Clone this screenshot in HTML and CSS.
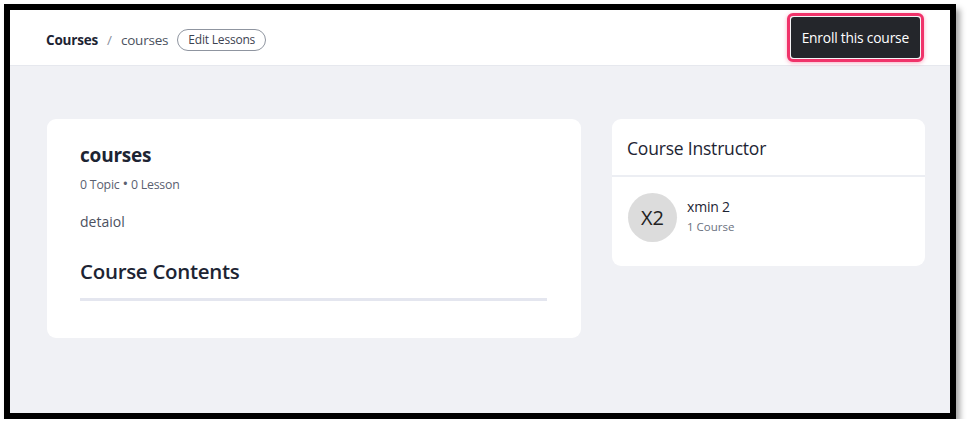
FILE: index.html
```html
<!DOCTYPE html>
<html>
<head>
<meta charset="utf-8">
<link rel="stylesheet" href="styles.css">
</head>
<body>
<div class="frame">
  <header class="topbar">
    <nav class="crumbs">
      <span class="crumb-root">Courses</span>
      <span class="crumb-sep">/</span>
      <span class="crumb-cur">courses</span>
      <button class="pill">Edit Lessons</button>
    </nav>
    <div class="enroll-wrap">
      <button class="enroll">Enroll this course</button>
    </div>
  </header>
  <main class="content">
    <section class="card course">
      <h1 class="course-title">courses</h1>
      <div class="meta">0 Topic <span class="dot">&bull;</span> 0 Lesson</div>
      <p class="desc">detaiol</p>
      <h2 class="contents-title">Course Contents</h2>
      <div class="rule"></div>
    </section>
    <aside class="card instructor">
      <div class="inst-head">Course Instructor</div>
      <div class="inst-body">
        <div class="avatar">X2</div>
        <div class="inst-info">
          <div class="inst-name">xmin 2</div>
          <div class="inst-count">1 Course</div>
        </div>
      </div>
    </aside>
  </main>
</div>
</body>
</html>
```

FILE: styles.css
```css
* { box-sizing: border-box; }
html, body { margin: 0; padding: 0; background: #fff; }
body { font-family: "Open Sans", "Noto Sans", sans-serif; color: #1d2433; }

.frame {
  margin: 4px 0 0 4px;
  width: 952px;
  height: 415px;
  border: 6px solid #000;
  background: #f0f1f5;
  box-shadow: 4px 5px 6px rgba(0,0,0,0.35);
  display: flex;
  flex-direction: column;
}

.topbar {
  height: 56px;
  flex: none;
  background: #fff;
  border-bottom: 1px solid #e6e8ee;
  display: flex;
  align-items: center;
  justify-content: space-between;
  padding: 4px 26px 0 36px;
}

.crumbs { display: flex; align-items: center; font-size: 13.5px; }
.crumb-root { font-weight: 700; color: #1d2433; letter-spacing: -0.2px; }
.crumb-sep { color: #8a909c; margin: 0 9px; }
.crumb-cur { color: #4b5160; margin-right: 9px; letter-spacing: -0.2px; }
.pill {
  font-family: inherit;
  font-size: 12px;
  color: #3c4250;
  background: #fff;
  border: 1px solid #8f95a0;
  border-radius: 12px;
  height: 22px;
  padding: 0 10px;
  letter-spacing: -0.2px;
}

.enroll-wrap {
  border: 3px solid #f0336a;
  border-radius: 6px;
  padding: 1px;
  box-shadow: 0 1px 4px rgba(240,51,106,0.4);
  background: #f4f4f6;
  margin-top: -5px;
}
.enroll {
  font-family: inherit;
  display: block;
  background: #24262b;
  color: #fff;
  border: 0;
  border-radius: 3px;
  height: 41px;
  padding: 0 11px;
  font-size: 13.8px;
  letter-spacing: -0.2px;
}

.content {
  flex: 1;
  display: grid;
  grid-template-columns: 534px 313px;
  column-gap: 31px;
  align-items: start;
  padding: 53px 0 0 37px;
}

.card { background: #fff; border-radius: 9px; }

.course { padding: 22px 34px 37px 33px; }
.course-title { margin: 0; font-size: 19px; font-weight: 700; line-height: 28px; letter-spacing: -0.2px; }
.meta { margin-top: 7px; font-size: 12.3px; color: #5a6070; letter-spacing: -0.2px; }
.dot { font-size: 15px; line-height: 1; }
.desc { margin: 19px 0 0; font-size: 14px; color: #4b5160; }
.contents-title { margin: 26px 0 0; font-size: 20.5px; font-weight: 600; line-height: 28px; letter-spacing: -0.3px; }
.rule { margin-top: 13px; height: 3px; background: #e4e6ef; }

.inst-head {
  height: 58px;
  display: flex;
  align-items: center;
  padding: 1px 15px 0;
  font-size: 17.5px;
  color: #1d2433;
  border-bottom: 2px solid #eceef3;
  letter-spacing: -0.2px;
}
.inst-body { display: flex; align-items: center; padding: 16px 16px 24px; }
.avatar {
  width: 49px; height: 49px; border-radius: 50%;
  background: #dcdcdc; color: #222;
  display: flex; align-items: center; justify-content: center;
  font-size: 20px;
}
.inst-info { margin-left: 10px; margin-top: -4px; }
.inst-name { font-size: 14px; color: #1d2433; letter-spacing: -0.2px; }
.inst-count { font-size: 11.5px; color: #6b7180; margin-top: 3px; }
```
